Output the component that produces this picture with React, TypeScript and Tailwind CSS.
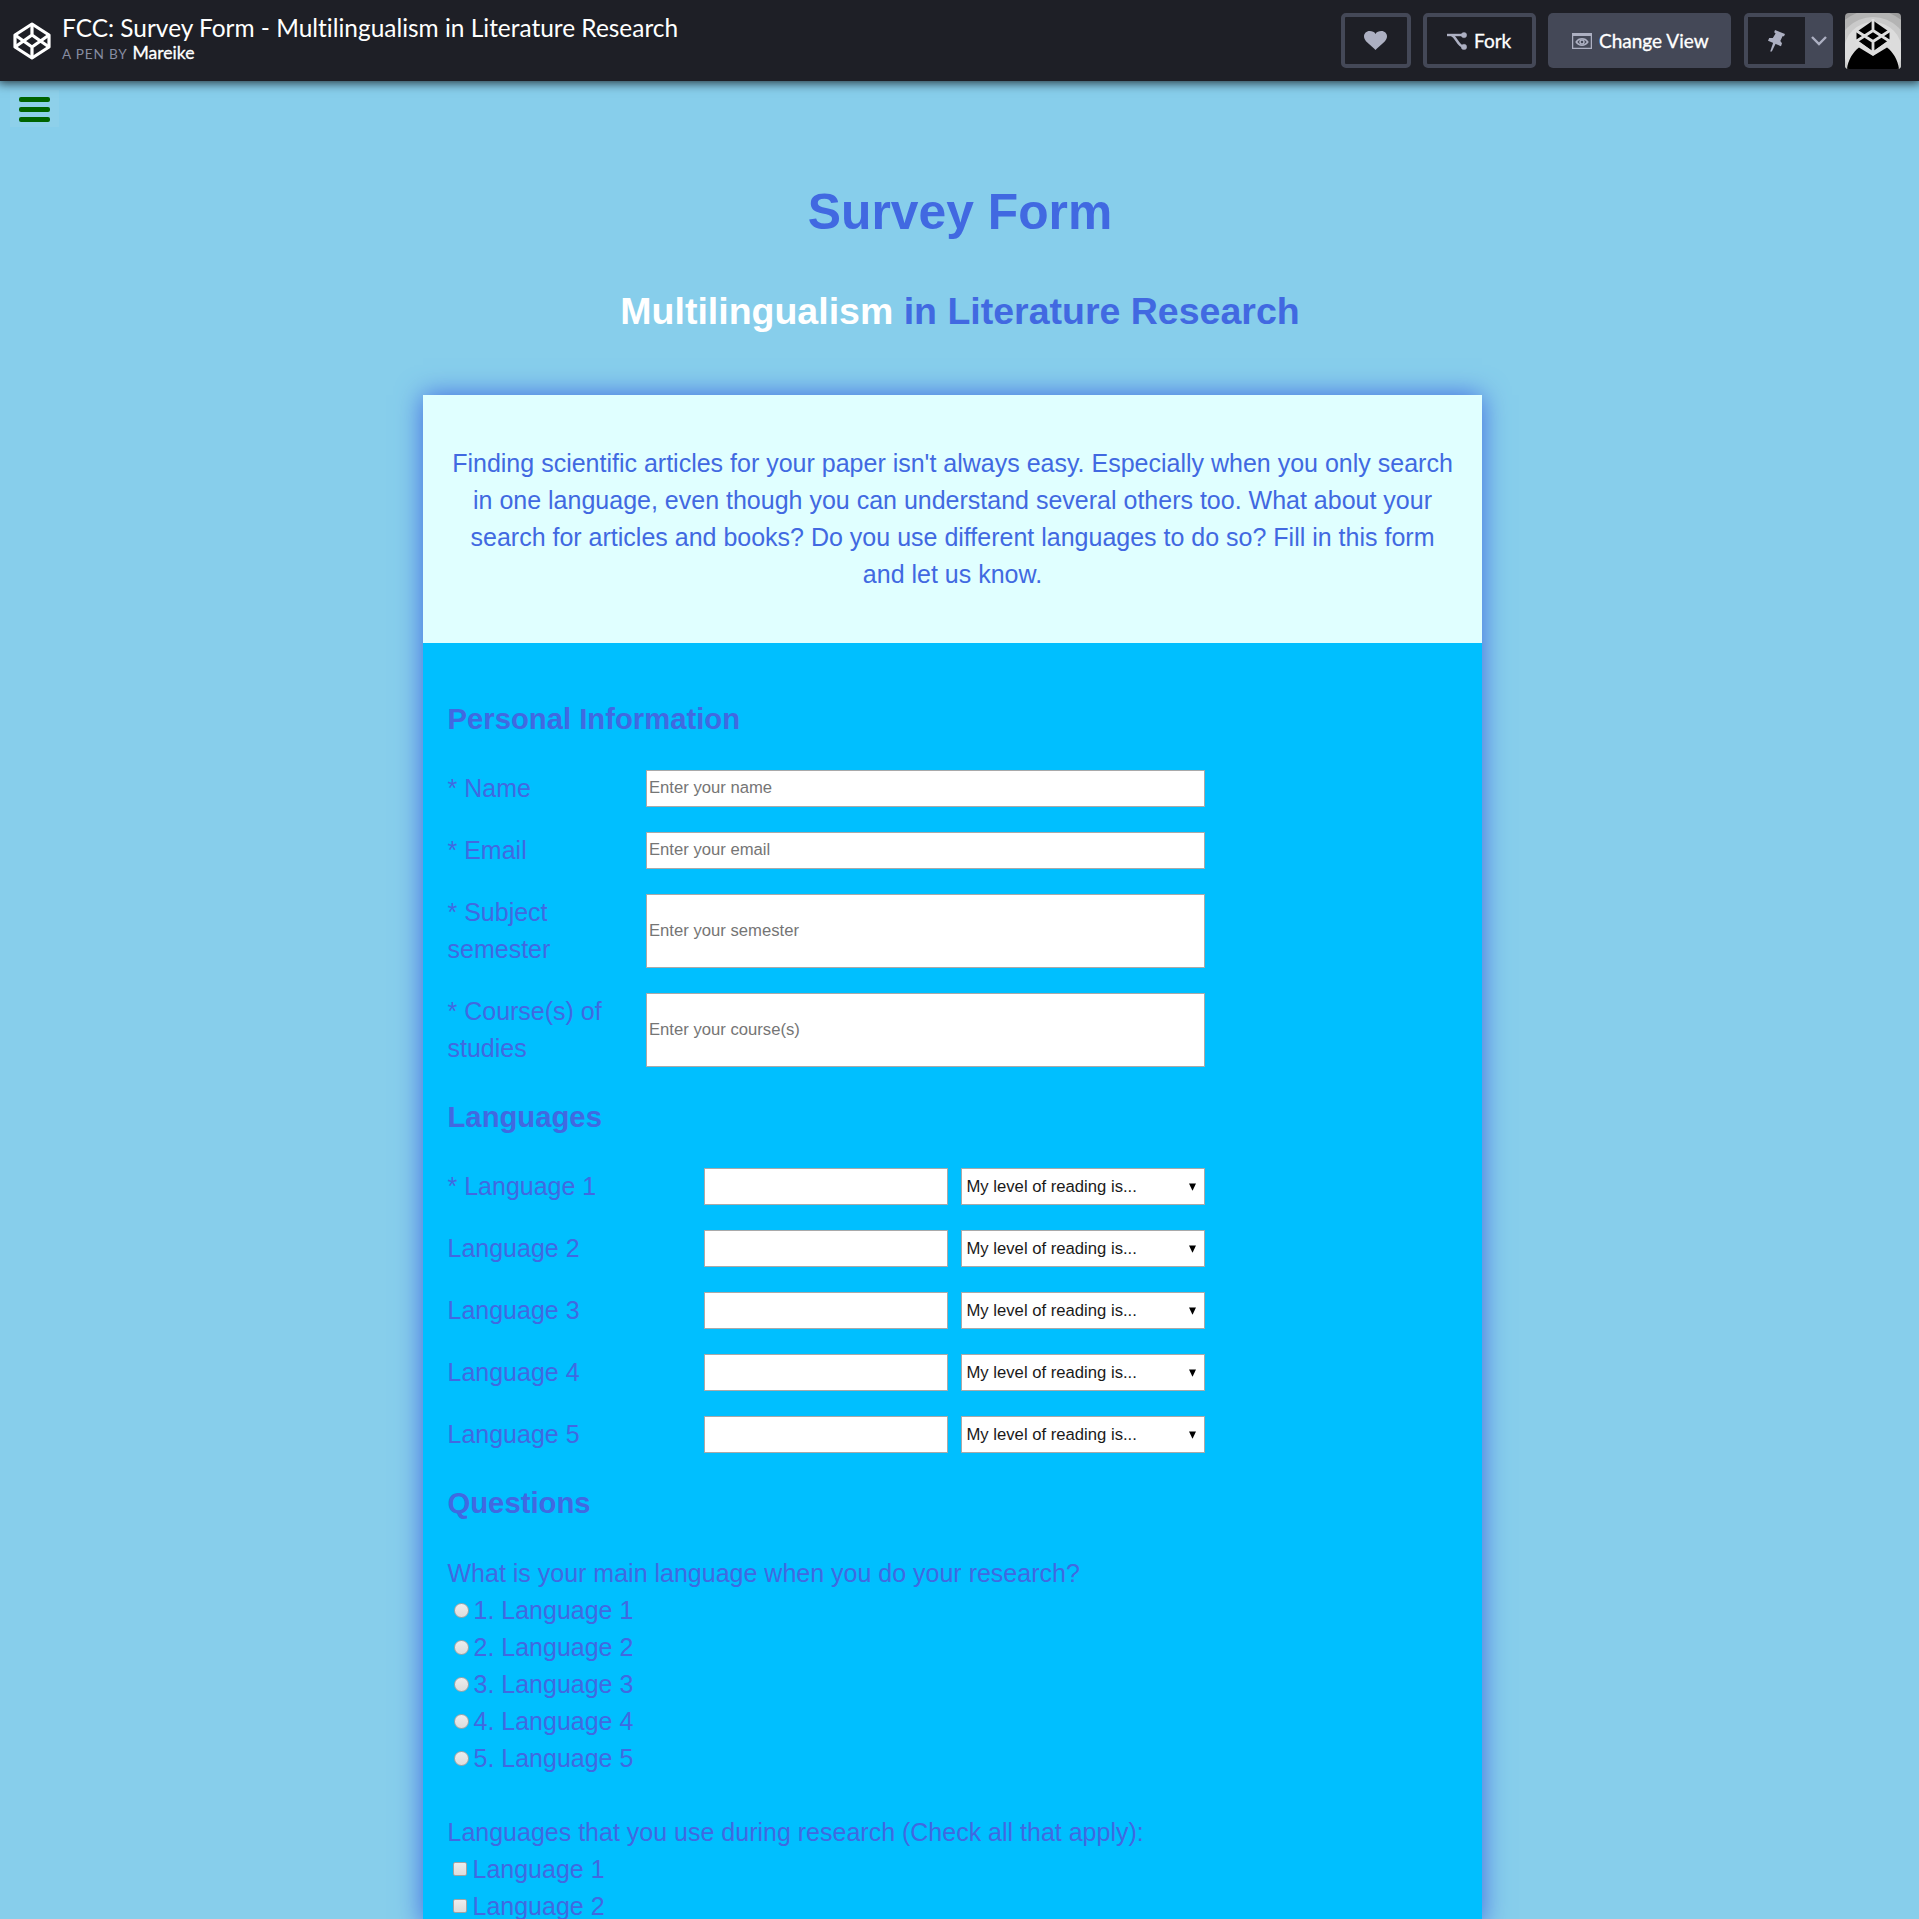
import React from "react";

function CodepenLogo() {
  return (
    <svg width="38" height="38" viewBox="0 0 38 38" fill="none" stroke="#fff" strokeWidth="3.2" strokeLinejoin="round">
      <path d="M19 2 L36 13 V25 L19 36 L2 25 V13 Z" />
      <path d="M19 2 V13 M19 36 V25 M2 13 L19 25 L36 13 M2 25 L19 13 L36 25" />
    </svg>
  );
}

function HeartIcon() {
  return (
    <svg width="23" height="19" viewBox="0 0 23 19" fill="#adb0c2">
      <path d="M11.5 19 C10 17.2 6.5 14.6 3.6 11.8 C1.2 9.5 0 7.600 0 5.500 C0 2.400 2.400 0 5.600 0 C8.200 0 10.500 0.900 11.500 2.900 C12.500 0.900 14.800 0 17.400 0 C20.600 0 23 2.400 23 5.500 C23 7.600 21.800 9.500 19.400 11.800 C16.500 14.600 13 17.200 11.500 19 Z" />
    </svg>
  );
}

function ForkIcon() {
  return (
    <svg width="20" height="18" viewBox="0 0 20 18" fill="#adb0c2" stroke="#adb0c2">
      <path d="M0 3 H17" strokeWidth="2.400" fill="none" />
      <path d="M4.500 3.200 C9 4 10.500 14 17 15" strokeWidth="2.400" fill="none" />
      <circle cx="17" cy="3.100" r="2.700" strokeWidth="0.400" />
      <circle cx="17" cy="14.900" r="2.700" strokeWidth="0.400" />
    </svg>
  );
}

function ViewIcon() {
  return (
    <svg width="20" height="16" viewBox="0 0 20 16" fill="none" stroke="#adb0c2">
      <path d="M0.600 0.600 H19.400 V15.400 H0.600 Z" strokeWidth="1.300" />
      <path d="M0 1.500 H20" strokeWidth="3" />
      <path d="M4.200 9 C7 4.800 13 4.800 15.800 9 C13 13.200 7 13.200 4.200 9 Z" strokeWidth="1.500" />
      <circle cx="10" cy="9" r="2" strokeWidth="1.500" />
    </svg>
  );
}

function PinIcon() {
  return (
    <svg width="17" height="22" viewBox="0 0 17 22" fill="#adb0c2">
      <path d="M7 0 L17 4 L16 6.300 L14.500 6.200 L12.300 11 L14 13.200 L13 16.300 L0 10.700 L1.200 8 L4.800 8 L7.600 3.400 L6.200 2.200 Z" />
      <path d="M5.400 12 L8 13 L3.800 21.600 L2.200 21.600 Z" />
    </svg>
  );
}

function Avatar() {
  return (
    <svg width="56" height="56" viewBox="0 0 56 56" className="rounded-[4px]">
      <rect width="56" height="56" fill="#9c9c9c" />
      <circle cx="28" cy="42" r="45" fill="#b4b4b4" />
      <circle cx="28" cy="40" r="36" fill="#cacaca" />
      <circle cx="28" cy="38" r="29" fill="#dcdcdc" />
      <path d="M2 56 C3 47 8 39 14 34.500 L28 43 L42 34.500 C48 39 53 47 54 56 Z" fill="#000" />
      <path d="M28 7.500 L44.500 19 V26.500 L28 38.500 L11.500 26.500 V19 Z" fill="#000" />
      <path d="M28 6 V18 M28 38.500 V28 M11 17.500 L28 28.500 L45 17.500 M11 28.500 L28 17.500 L45 28.500" stroke="#dedede" strokeWidth="2.800" fill="none" />
      <path d="M11 29 L28 40.500 L45 29" stroke="#dedede" strokeWidth="3.400" fill="none" />
    </svg>
  );
}

function TopBar() {
  return (
    <header className="relative z-10 flex h-[81px] shrink-0 items-center bg-[#1e1f26] pl-[12.500px] pr-[18px] font-['Lato',sans-serif] text-white shadow-[0_0_10px_2px_rgba(0,0,0,0.75)]">
      <CodepenLogo />
      <div className="ml-[11.500px] flex flex-col pb-[3px]">
        <h1 className="text-[24.450px] leading-[28px] whitespace-nowrap [font-variant-ligatures:none]">FCC: Survey Form - Multilingualism in Literature Research</h1>
        <p className="flex items-baseline gap-[5px] text-[17.600px] leading-[22px]">
          <span className="text-[13.600px] tracking-[0.8px] text-[#868ca0]">A PEN BY</span>
          <span className="[-webkit-text-stroke:0.3px_white]">Mareike</span>
        </p>
      </div>
      <div className="ml-auto flex h-[55px] items-stretch text-[19px] [-webkit-text-stroke:0.3px_white]">
        <button className="flex w-[70px] items-center justify-center rounded-[5px] border-4 border-[#444857] pr-px">
          <HeartIcon />
        </button>
        <button className="ml-3 flex w-[113px] items-center rounded-[5px] border-4 border-[#444857] pl-5">
          <ForkIcon />
          <span className="ml-[7px]">Fork</span>
        </button>
        <button className="ml-3 flex w-[183px] items-center rounded-[5px] bg-[#444857] pl-6">
          <ViewIcon />
          <span className="ml-[7px] whitespace-nowrap">Change View</span>
        </button>
        <div className="ml-[13px] flex w-[89px] rounded-[5px] bg-[#444857] p-1 pr-0">
          <button className="flex w-[57px] items-center justify-center bg-[#1e1f26]">
            <PinIcon />
          </button>
          <button className="flex flex-1 items-center justify-center pt-px pr-px">
            <svg width="16" height="10" viewBox="0 0 16 10" fill="none" stroke="#adb0c2" strokeWidth="2.400">
              <path d="M1 1 L8 8 L15 1" />
            </svg>
          </button>
        </div>
        <div className="ml-3 h-14 w-14">
          <Avatar />
        </div>
      </div>
    </header>
  );
}

function SectionTitle({ children }: { children: React.ReactNode }) {
  return <h3 className="mt-[28.800px] mb-[29.100px] text-[29.250px] leading-[43.300px] font-bold">{children}</h3>;
}

const personal = [
  { label: <>* Name</>, hint: "Enter your name", tall: false },
  { label: <>* Email</>, hint: "Enter your email", tall: false },
  { label: <>* Subject<br />semester</>, hint: "Enter your semester", tall: true },
  { label: <>* Course(s) of<br />studies</>, hint: "Enter your course(s)", tall: true },
];

const languages = ["* Language 1", "Language 2", "Language 3", "Language 4", "Language 5"];

function PersonalInformation() {
  return (
    <div className="flex flex-col gap-[25px]">
      {personal.map((field) => (
        <div key={field.hint} className="flex">
          <label className="w-[198.500px]">{field.label}</label>
          <input
            placeholder={field.hint}
            className={
              field.tall
                ? "h-[74px] w-[558.500px] border border-[#a9a9a9] bg-white px-0.5 text-[16.670px] placeholder:text-[#757575]"
                : "h-[37px] w-[558.500px] border border-[#a9a9a9] bg-white px-0.5 pb-0.5 text-[16.670px] placeholder:text-[#757575]"
            }
          />
        </div>
      ))}
    </div>
  );
}

function Languages() {
  return (
    <div className="flex flex-col gap-[25px]">
      {languages.map((name) => (
        <div key={name} className="flex">
          <label className="w-[256.500px]">{name}</label>
          <input className="h-[37px] w-[244px] border border-[#a9a9a9] bg-white" />
          <button className="ml-[13px] flex h-[37px] w-[244px] items-center justify-between border border-[#a9a9a9] bg-white pr-[8px] pl-[4.500px] text-[16.670px] text-[#1a1a1a]">
            <span>My level of reading is...</span>
            <svg className="mt-px" width="7" height="8" viewBox="0 0 7 8">
              <path d="M0 0.500 H7 L3.500 7.800 Z" fill="#000" />
            </svg>
          </button>
        </div>
      ))}
    </div>
  );
}

function Questions() {
  return (
    <div>
      <p>What is your main language when you do your research?</p>
      {[1, 2, 3, 4, 5].map((n) => (
        <label key={n} className="flex items-center pl-[6px]">
          <span className="h-[15px] w-[15px] rounded-full border border-[#a3a3a3] bg-linear-to-b from-[#ededed] to-[#dcdcdc]" />
          <span className="ml-[5px]">{n}. Language {n}</span>
        </label>
      ))}
      <p className="mt-[37px]">Languages that you use during research (Check all that apply):</p>
      {[1, 2].map((n) => (
        <label key={n} className="flex items-center pl-[5px]">
          <span className="h-3.5 w-3.5 rounded-xs border border-[#a3a3a3] bg-linear-to-b from-[#ededed] to-[#dcdcdc]" />
          <span className="ml-[6px]">Language {n}</span>
        </label>
      ))}
    </div>
  );
}

export default function App() {
  return (
    <div className="flex h-[1919px] w-full flex-col overflow-hidden bg-[#87ceeb] font-['Liberation_Sans',Arial,sans-serif] text-[25px] leading-[37px] text-[#4169e1]">
      <TopBar />
      <div className="mt-[9px] ml-[10px] flex h-[37px] w-[49px] shrink-0 flex-col items-start justify-center gap-[5px] bg-[#8ed0ea] pt-0.5 pl-[9px]">
        <span className="h-[5px] w-[31px] rounded-[2px] bg-[#006400]" />
        <span className="h-[5px] w-[31px] rounded-[2px] bg-[#006400]" />
        <span className="h-[5px] w-[31px] rounded-[2px] bg-[#006400]" />
      </div>
      <h1 className="mt-[48px] pl-px text-center text-[49.800px] leading-[74px] font-bold">Survey Form</h1>
      <h2 className="mt-[34px] pl-px text-center text-[37.500px] leading-[56px] font-bold">
        <span className="text-white">Multilingualism</span> in Literature Research
      </h2>
      <main className="mt-[56px] ml-[423px] w-[1059px] shrink-0 bg-[#00bfff] shadow-[0_0_25px_#4169e1]">
        <p className="bg-[#e0ffff] pt-[50px] pb-[50px] text-center whitespace-nowrap">
          Finding scientific articles for your paper isn't always easy. Especially when you only search
          <br />
          in one language, even though you can understand several others too. What about your
          <br />
          search for articles and books? Do you use different languages to do so? Fill in this form
          <br />
          and let us know.
        </p>
        <form className="flex flex-col pt-[26px] pl-[24.500px]">
          <SectionTitle>Personal Information</SectionTitle>
          <PersonalInformation />
          <SectionTitle>Languages</SectionTitle>
          <Languages />
          <SectionTitle>Questions</SectionTitle>
          <Questions />
        </form>
      </main>
    </div>
  );
}
